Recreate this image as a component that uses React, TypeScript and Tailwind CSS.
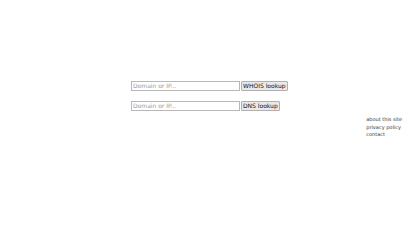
import React from "react";

export default function App() {
  return (
    <div className="w-[420px] h-[236px] bg-white font-['DejaVu_Sans',sans-serif] text-[#222]">
      <div className="pt-[81px] flex justify-center">
        <div className="w-[158px] flex flex-col gap-[10px]">
          <div className="flex items-center gap-[1px]">
            <input
              placeholder="Domain or IP..."
              className="shrink-0 w-[105px] h-[8px] box-content py-0 px-[1px] border border-[#b8b8b8] text-[6px] leading-[8px] placeholder:text-[#9a9a9a] outline-none"
            />
            <button className="shrink-0 whitespace-nowrap h-[8px] box-content px-[1px] border border-[#b0b0b0] bg-[#e9e9e9] text-[6px] leading-[8px] text-[#111] rounded-[1px]">
              WHOIS lookup
            </button>
          </div>
          <div className="flex items-center gap-[1px]">
            <input
              placeholder="Domain or IP..."
              className="shrink-0 w-[105px] h-[8px] box-content py-0 px-[1px] border border-[#b8b8b8] text-[6px] leading-[8px] placeholder:text-[#9a9a9a] outline-none"
            />
            <button className="shrink-0 whitespace-nowrap h-[8px] box-content px-[1px] border border-[#b0b0b0] bg-[#e9e9e9] text-[6px] leading-[8px] text-[#111] rounded-[1px]">
              DNS lookup
            </button>
          </div>
        </div>
      </div>
      <div className="flex justify-end pr-[18px] pt-[5px]">
        <div className="flex flex-col text-[5px] leading-[7.5px] text-[#333]">
          <a href="#">about this site</a>
          <a href="#">privacy policy</a>
          <a href="#">contact</a>
        </div>
      </div>
    </div>
  );
}
